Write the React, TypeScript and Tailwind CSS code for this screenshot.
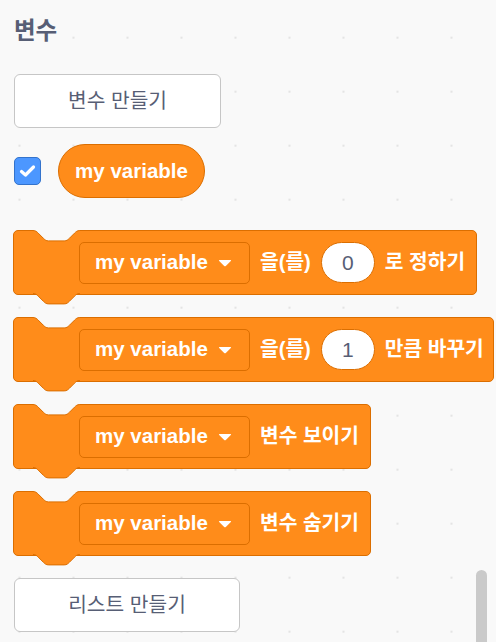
const font = "font-['Liberation_Sans','Noto_Sans_CJK_KR',sans-serif]";

const NOTCH =
  "c2.6 0 3.9 1.3 5.2 2.6 l5.2 5.2 c1.3 1.3 2.6 2.6 5.2 2.6 h15.6 c2.6 0 3.9 -1.3 5.2 -2.6 l5.2 -5.2 c1.3 -1.3 2.6 -2.6 5.2 -2.6";

const Notch = ({ fill, className }: { fill: string; className: string }) => (
  <svg width="48" height="13" viewBox="0 0 48 13" className={className}>
    <path d={`M0 0.5 ${NOTCH} V0 H0 Z`} fill={fill} />
    <path d={`M0 0.5 ${NOTCH}`} fill="none" stroke="#db6e00" strokeWidth="1" />
  </svg>
);

const Caret = () => (
  <svg width="14" height="8" viewBox="0 0 14 8">
    <path d="M1.5 1 H12.5 Q13.6 1 12.8 1.9 L7.8 6.9 Q7 7.7 6.2 6.9 L1.2 1.9 Q0.4 1 1.5 1 Z" fill="#fff" />
  </svg>
);

const VarDropdown = () => (
  <div className="flex items-center justify-between w-[171px] h-[42px] shrink-0 pl-[15px] pr-[17px] rounded-[5px] border border-[#db6e00] bg-[#ff8c1a]">
    <span className="text-[20.5px] font-bold text-white">my variable</span>
    <Caret />
  </div>
);

const Oval = ({ value }: { value: string }) => (
  <div className="flex items-center justify-center w-[54px] h-[41px] shrink-0 rounded-full bg-white border border-[#db6e00] text-[21px] font-medium text-[#575e75]">
    {value}
  </div>
);

const Label = ({ children }: { children: string }) => (
  <span className="text-[20.3px] font-semibold text-white whitespace-nowrap">{children}</span>
);

const Block = ({ width, children }: { width: string; children: React.ReactNode }) => (
  <div
    className={`relative flex items-center gap-[10px] h-[65px] pl-[65px] rounded-[5px] border border-[#db6e00] bg-[#ff8c1a] ${width}`}
  >
    <Notch fill="#f9f9f9" className="absolute -top-px left-[19px]" />
    <Notch fill="#ff8c1a" className="absolute top-full left-[19px] -mt-px" />
    {children}
  </div>
);

const PaletteButton = ({ label, width }: { label: string; width: string }) => (
  <button
    className={`h-[54px] ${width} rounded-[6px] border border-[#c6c6c6] bg-white text-[20.3px] text-[#575e75]`}
  >
    {label}
  </button>
);

export default function App() {
  return (
    <div
      className={`relative w-[496px] h-[642px] overflow-hidden bg-[#f9f9f9] bg-[radial-gradient(circle,#e4e4e4_1px,transparent_1.6px)] bg-[length:54px_54px] bg-[position:-7.5px_10.7px] ${font}`}
    >
      <div className="flex flex-col items-start pt-[15px] pl-[14px]">
        <h2 className="text-[23.5px] leading-[32px] font-bold text-[#575e75]">변수</h2>

        <div className="mt-[27px]">
          <PaletteButton label="변수 만들기" width="w-[207px]" />
        </div>

        <div className="mt-[16px] flex items-center gap-[17px] h-[54px]">
          <div className="flex items-center justify-center w-[27px] h-[28px] rounded-[5px] bg-[#4c97ff] border border-[#3373cc]">
            <svg width="17" height="14" viewBox="0 0 17 14">
              <path d="M2.5 7.5 L6.5 11 L14.5 3" fill="none" stroke="#fff" strokeWidth="3.2" strokeLinecap="round" strokeLinejoin="round" />
            </svg>
          </div>
          <div className="flex items-center justify-center w-[147px] h-[54px] rounded-full bg-[#ff8c1a] border border-[#db6e00]">
            <span className="text-[20.5px] font-bold text-white">my variable</span>
          </div>
        </div>

        <div className="mt-[32px] -ml-px flex flex-col gap-[22px]">
          <Block width="w-[464px]">
            <VarDropdown />
            <Label>을(를)</Label>
            <Oval value="0" />
            <Label>로 정하기</Label>
          </Block>
          <Block width="w-[481px]">
            <VarDropdown />
            <Label>을(를)</Label>
            <Oval value="1" />
            <Label>만큼 바꾸기</Label>
          </Block>
          <Block width="w-[358px]">
            <VarDropdown />
            <Label>변수 보이기</Label>
          </Block>
          <Block width="w-[358px]">
            <VarDropdown />
            <Label>변수 숨기기</Label>
          </Block>
        </div>

        <div className="mt-[22px]">
          <PaletteButton label="리스트 만들기" width="w-[226px]" />
        </div>
      </div>

      <div className="absolute left-[476px] top-[570px] w-[11px] h-[100px] rounded-full bg-[#cacaca]" />
    </div>
  );
}
